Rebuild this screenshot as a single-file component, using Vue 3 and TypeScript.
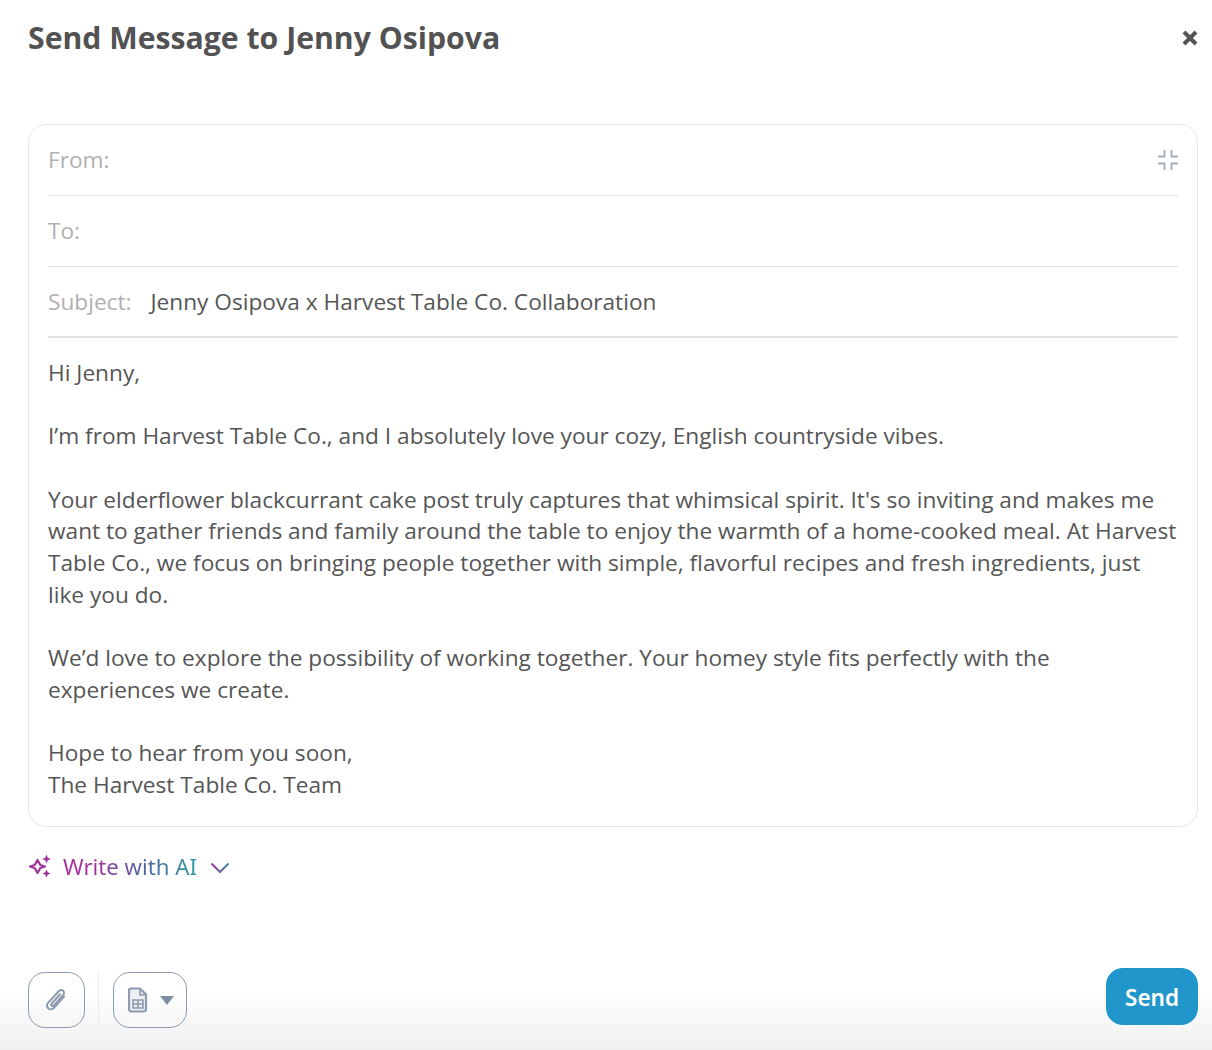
<script setup lang="ts">
const paragraphs: string[][] = [
  ['Hi Jenny,'],
  ['I’m from Harvest Table Co., and I absolutely love your cozy, English countryside vibes.'],
  ["Your elderflower blackcurrant cake post truly captures that whimsical spirit. It's so inviting and makes me want to gather friends and family around the table to enjoy the warmth of a home-cooked meal. At Harvest Table Co., we focus on bringing people together with simple, flavorful recipes and fresh ingredients, just like you do."],
  ['We’d love to explore the possibility of working together. Your homey style fits perfectly with the experiences we create.'],
  ['Hope to hear from you soon,', 'The Harvest Table Co. Team'],
]
</script>

<template>
  <div class="modal">
    <header class="head">
      <h1 class="title">Send Message to Jenny Osipova</h1>
      <svg class="close" width="16" height="16" viewBox="0 0 16 16" aria-label="Close">
        <path d="M2 2 14 14M14 2 2 14" stroke="#555" stroke-width="4" stroke-linecap="butt" fill="none" />
      </svg>
    </header>

    <section class="card">
      <div class="row">
        <span class="label">From:</span>
        <svg class="collapse" width="22" height="22" viewBox="0 0 22 22" fill="none" stroke="#a0adbc" stroke-width="1.8">
          <path d="M7.5 1v6.5H1M14.5 1v6.5H21M7.5 21v-6.5H1M14.5 21v-6.5H21" />
        </svg>
      </div>
      <div class="row">
        <span class="label">To:</span>
      </div>
      <div class="row row-strong">
        <span class="label label-subject">Subject:</span>
        <span class="subject">Jenny Osipova x Harvest Table Co. Collaboration</span>
      </div>
      <div class="body">
        <p v-for="(p, i) in paragraphs" :key="i" class="para">
          <span v-for="(l, j) in p" :key="j" class="line">{{ l }}</span>
        </p>
      </div>
    </section>

    <div class="ai">
      <svg width="24" height="24" viewBox="0 0 24 24" fill="none">
        <path d="M9.5 6 12.3 11 17 12.5 12.3 14 9.5 19 6.7 14 2 12.5 6.7 11Z" stroke="#a3329e" stroke-width="2.2" stroke-linejoin="round" />
        <path d="M18.5 .5 19.8 3.7 23 5 19.8 6.3 18.5 9.5 17.2 6.3 14 5 17.2 3.7Z" fill="#a3329e" />
        <path d="M18.5 15.5 19.8 18.2 22.5 19.5 19.8 20.8 18.5 23.5 17.2 20.8 14.5 19.5 17.2 18.2Z" fill="#a3329e" />
      </svg>
      <span class="ai-text">Write with AI</span>
      <svg class="chev" width="20" height="12" viewBox="0 0 20 12" fill="none">
        <path d="M1.5 1.5 10 10 18.5 1.5" stroke="url(#chevGrad)" stroke-width="2" />
        <defs>
          <linearGradient id="chevGrad" x1="0" x2="1" y1="0" y2="0">
            <stop offset="0" stop-color="#a3329e" />
            <stop offset="1" stop-color="#3f8fa8" />
          </linearGradient>
        </defs>
      </svg>
    </div>

    <footer class="foot">
      <div class="tools">
        <button class="tool tool-clip" type="button" aria-label="Attach">
          <svg width="23" height="23" viewBox="0 0 26 26" fill="none" stroke="#8c9bae" stroke-width="2.3" stroke-linecap="round">
            <path d="M21.5 8.5 10.5 21c-2 2.2-5 2.4-6.8.8-1.8-1.6-1.8-4.4.2-6.7L15.5 2.6c1.4-1.5 3.5-1.7 4.9-.5 1.4 1.2 1.4 3.3 0 4.9L10 18.6c-.8.9-1.9 1-2.6.4-.7-.6-.7-1.7.1-2.6L17 6" />
          </svg>
        </button>
        <span class="divider"></span>
        <button class="tool tool-tpl" type="button" aria-label="Template">
          <svg width="20" height="26" viewBox="0 0 20 26" fill="none">
            <path d="M3 1.5h9l6 6V22a2.5 2.5 0 0 1-2.5 2.5h-12A2.5 2.5 0 0 1 1 22V3.5a2 2 0 0 1 2-2Z" stroke="#8c9bae" stroke-width="2.2" fill="#eef0f3" />
            <path d="M12 1.5V8h6" stroke="#8c9bae" stroke-width="1.6" />
            <path d="M5 13h10v8H5zM10 13v8M5 17h10" stroke="#8c9bae" stroke-width="1.6" />
          </svg>
          <svg width="14" height="9" viewBox="0 0 14 9"><path d="M0 0h14L7 9Z" fill="#7f8fa3" /></svg>
        </button>
      </div>
      <button class="send" type="button">Send</button>
    </footer>
  </div>
</template>

<style>
html, body { margin: 0; background: #fff; }
</style>

<style scoped>
.modal {
  width: 1212px;
  height: 1050px;
  box-sizing: border-box;
  padding: 0 14px 0 28px;
  display: flex;
  flex-direction: column;
  font-family: "Open Sans", "Noto Sans", sans-serif;
  background: linear-gradient(to bottom, #fff 0, #fff 990px, #f0f0f0 1050px);
}
.head {
  height: 124px;
  display: flex;
  justify-content: space-between;
  align-items: flex-start;
  flex-shrink: 0;
}
.title {
  margin: 15px 0 0;
  font-size: 30.2px;
  line-height: 46px;
  font-weight: 700;
  color: #525252;
}
.close { margin: 30px 0 0 0; }
.card {
  height: 703px;
  box-sizing: border-box;
  border: 1px solid #e6e6e6;
  border-radius: 18px;
  padding: 0 19px;
  flex-shrink: 0;
}
.row {
  height: 71px;
  box-sizing: border-box;
  border-bottom: 1px solid #e2e2e2;
  display: flex;
  align-items: center;
  font-size: 22.67px;
}
.row-strong { border-bottom: 2px solid #e2e2e2; }
.label { color: #b0b0b0; margin-bottom: 2px; }
.label-subject { margin-bottom: 0; }
.subject { margin-left: 19px; color: #555; }
.collapse { margin-left: auto; margin-right: -1px; }
.body {
  padding-top: 19px;
  font-size: 22.67px;
  line-height: 31.7px;
  color: #555;
}
.para { margin: 0 0 31.7px; }
.line { display: block; }
.ai {
  margin-top: 25px;
  display: flex;
  align-items: center;
  height: 28px;
  flex-shrink: 0;
}
.ai-text {
  margin-left: 11px;
  font-family: "Noto Sans", sans-serif;
  font-size: 22.2px;
  background: linear-gradient(to right, #a3329e 0, #a3329e 25%, #4f66a3 60%, #2e9ba3 100%);
  -webkit-background-clip: text;
  background-clip: text;
  color: transparent;
}
.chev { margin-left: 13px; margin-top: 3px; }
.foot {
  margin-top: auto;
  padding-bottom: 22px;
  display: flex;
  justify-content: space-between;
  align-items: flex-end;
}
.tools { display: flex; align-items: center; height: 56px; }
.tool {
  height: 56px;
  box-sizing: border-box;
  border: 1.5px solid #8c9bae;
  border-radius: 17px;
  background: transparent;
  padding: 0;
  display: flex;
  align-items: center;
  justify-content: center;
}
.tool-clip { width: 57px; }
.tool-tpl { width: 74px; gap: 12px; padding-left: 1px; }
.divider { width: 1px; height: 56px; background: #ececec; margin: 0 14px 0 13px; }
.send {
  width: 92px;
  height: 57px;
  border: 0;
  border-radius: 17px;
  background: #2096cb;
  color: #fff;
  font-family: "Noto Sans", sans-serif;
  font-size: 22.5px;
  font-weight: 600;
  padding: 1px 0 0;
  margin-bottom: 3px;
}
</style>
